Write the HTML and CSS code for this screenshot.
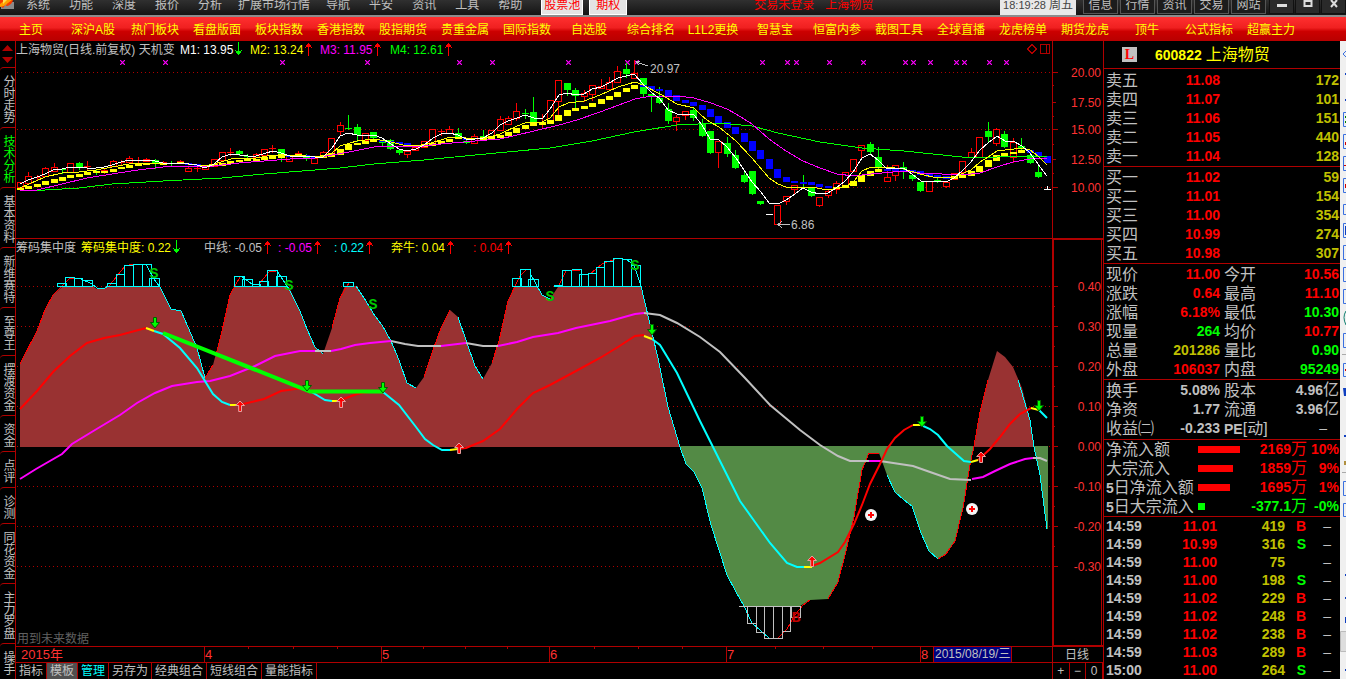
FILE: index.html
```html
<!DOCTYPE html>
<html lang="zh-CN">
<head>
<meta charset="utf-8">
<title>上海物贸 600822</title>
<link rel="stylesheet" href="styles.css">
</head>
<body>
<svg class="defs" width="0" height="0" aria-hidden="true">
  <defs>
    <symbol id="up" viewBox="0 0 7 14"><path d="M3 1h1v13H3zM2 2h3v1H2zM1 3h2v2H1zM4 3h2v2H4zM0 5h1v1H0zM6 5h1v1H6z" fill="currentColor"/></symbol>
    <symbol id="down" viewBox="0 0 7 14"><path d="M3 0h1v13H3zM2 11h3v1H2zM1 9h2v2H1zM4 9h2v2H4zM0 8h1v1H0zM6 8h1v1H6z" fill="currentColor"/></symbol>
    <symbol id="sell" viewBox="0 0 10 12"><path d="M3.500.5h3v5h3L5 11 .5 5.500h3z" fill="#0f0" stroke="#006000"/></symbol>
    <symbol id="buy" viewBox="0 0 10 12"><path d="M5 1 .7 5.500h3v6h2.800v-6h3z" fill="#f00" stroke="#e8a0a0"/></symbol>
    <symbol id="cross" viewBox="0 0 12 12"><circle cx="6" cy="6" r="6" fill="#f4f4f4"/><path d="M5 3h2v2h2v2H7v2H5V7H3V5h2z" fill="#f00"/></symbol>
    <symbol id="mark" viewBox="0 0 5 5"><path d="M0 0l5 5M5 0L0 5" stroke="#f0f" stroke-width="1.200"/></symbol>
  </defs>
</svg>
<div class="app">
  <header class="menubar">
    <svg class="logo" viewBox="0 0 16 10" aria-hidden="true"><path d="M1 2h13v7H1z" fill="#8a8a8a"/><path d="M0 0h13c-1 4-4 6-7 6l1-3-4 5-3-2z" fill="#f63a00"/><path d="M5 0h7L8 3 4 6 0 7V4z" fill="#ffa000"/><path d="M3 0h4L3 4z" fill="#ffe050"/></svg>
    <nav class="menus">
      <button>系统</button><button>功能</button><button>深度</button><button>报价</button><button>分析</button><button class="long">扩展市场行情</button><button>导航</button><button>平安</button><button>资讯</button><button>工具</button><button>帮助</button>
    </nav>
    <button class="pill pill-first">股票池</button>
    <button class="pill">期权</button>
    <div class="notice"><span>交易未登录</span><span>上海物贸</span></div>
    <time class="clock">18:19:28 <b>周五</b></time>
    <div class="quick"><button>信息</button><button>行情</button><button>资讯</button><button>交易</button><button>网站</button></div>
    <div class="window">
      <button aria-label="最小化"><svg viewBox="0 0 10 8"><path d="M0 4h10v3H0z" fill="#ddd"/></svg></button>
      <button aria-label="最大化"><svg viewBox="0 0 10 8"><path d="M1.500 1h7v5h-7z" fill="none" stroke="#ddd" stroke-width="2"/></svg></button>
      <button aria-label="关闭"><svg viewBox="0 0 10 8"><path d="M2 0l6 7M8 0L2 7" stroke="#ddd" stroke-width="2"/></svg></button>
    </div>
  </header>
  <nav class="ribbon">
    <a href="#">主页</a><a href="#">深沪A股</a><a href="#">热门板块</a><a href="#">看盘版面</a><a href="#">板块指数</a><a href="#">香港指数</a><a href="#">股指期货</a><a href="#">贵重金属</a><a href="#">国际指数</a><a href="#">自选股</a><a href="#">综合排名</a><a href="#">L1L2更换</a><a href="#">智慧宝</a><a href="#">恒富内参</a><a href="#">截图工具</a><a href="#">全球直播</a><a href="#">龙虎榜单</a><a href="#">期货龙虎</a><a href="#">顶牛</a><a href="#">公式指标</a><a href="#">超赢主力</a>
  </nav>
  <main class="work">
    <nav class="side">
      <div class="scroll"><svg viewBox="0 0 15 26"><path d="M2 10l5.500-6 5.500 6zM2 16l5.500 6 5.500-6z" fill="#b00000"/></svg></div>
      <a href="#">分时走势</a><a href="#" class="on">技术分析</a><a href="#">基本资料</a><a href="#">新维赛特</a><a href="#">至尊王</a><a href="#">摆渡资金</a><a href="#">资金</a><a href="#">点评</a><a href="#">诊测</a><a href="#">同花资金</a><a href="#">主力罗盘</a><a href="#">操手</a>
    </nav>

    <section class="charts">
      <div class="pane price">
        <div class="legend legend-price">
          <span class="dim">上海物贸(日线.前复权) 天机变</span>
          <span class="white">M1: 13.95<svg class="green"><use href="#down"/></svg></span>
          <span class="yellow">M2: 13.24<svg class="red"><use href="#up"/></svg></span>
          <span class="magenta">M3: 11.95<svg class="red"><use href="#up"/></svg></span>
          <span class="green">M4: 12.61<svg class="red"><use href="#up"/></svg></span>
        </div>
        <svg class="plot" viewBox="16 41 1087 198">
          <path class="grid" d="M17 72.500H1052M17 129.500H1052M17 187.500H1052"/>
          <g id="marks"></g>
          <g id="candles" class="crisp"></g>
          <g id="band" class="crisp"></g>
          <g class="lines">
            <polyline stroke="#0f0" points="20,191 45,190 79,188 112,184 163,181 222,178 264,174 315,170 340,168 374,164 424,160 475,155 550,148 592,141 634,132 677,125 719,123 752,126 778,133 820,142 862,148 904,151 962,157 997,157 1030,156 1047,157"/>
            <polyline stroke="#f0f" points="20,190 37,190 62,184 87,178 112,174 138,170 163,167 188,166 214,166 239,163 264,161 290,159 315,158 332,155 349,152 374,147 391,146 424,146 441,144 475,141 500,139 534,131 559,125 577,120 600,112 635,99 651,96 677,96 694,98 711,103 727,109 736,114 752,124 769,139 786,151 803,161 820,168 837,174 854,176 871,174 904,171 920,173 963,175 980,173 997,167 1013,162 1030,159 1047,158"/>
            <polyline stroke="#ff0" points="20,188 45,177 62,173 79,172 96,170 112,167 129,164 146,163 172,163 188,164 205,166 214,164 231,159 248,158 256,158 273,155 290,155 306,156 323,156 332,153 340,146 357,141 374,139 391,142 407,146 424,145 441,140 450,137 466,138 483,139 500,134 517,126 525,123 542,122 550,118 559,107 568,103 584,101 600,95 618,87 635,82 643,85 660,94 677,104 694,108 702,116 710,122 719,127 736,141 752,158 769,178 778,184 786,187 811,187 828,190 845,187 854,181 862,171 871,167 895,168 904,169 920,174 937,178 954,177 971,170 980,162 988,157 997,151 1022,148 1030,150 1038,156 1047,165"/>
            <polyline stroke="#fff" points="20,184 28,180 37,177 45,174 53,170 62,169 70,167 79,167 87,168 96,168 104,167 112,165 121,162 129,160 146,160 155,161 163,163 180,163 197,165 205,168 214,164 222,157 231,154 248,156 256,156 273,151 281,153 290,156 298,156 315,157 323,157 332,148 340,136 348,133 357,135 374,135 382,138 391,144 399,149 407,151 416,149 424,145 433,138 441,134 449,133 458,135 466,139 475,139 483,138 492,133 500,125 508,121 517,118 525,115 534,118 542,119 550,109 559,95 567,93 576,95 584,94 592,89 601,87 609,83 618,78 626,76 634,74 643,84 651,92 660,99 668,110 677,114 694,115 702,125 710,139 719,140 727,147 736,158 744,170 752,182 761,192 769,203 778,204 786,200 795,194 803,188 811,192 820,194 828,193 836,188 845,181 853,172 862,158 870,154 878,160 887,169 895,168 904,168 912,174 921,181 937,181 946,182 954,178 963,170 971,162 980,150 988,143 997,136 1005,141 1013,141 1022,146 1030,153 1038,164 1047,176"/>
            <path stroke="#c0c0c0" d="M648 66L636 62m4-1l-4 1 3 3M790 224.500H778m4-3l-4 3 4 3"/>
          </g>
          <g class="note"><text x="650" y="73">20.97</text><text x="791" y="229">6.86</text></g>
          <path class="frame" d="M1032 44.500l4.500 4.500-4.500 4.500-4.500-4.500zM1040.500 44.500h9v9h-9zM1046.500 44.500v9M1052.500 41V239M16 238.500H1103M1053 72.500h5M1053 102.500h3M1053 129.500h5M1053 159.500h3M1053 187.500h5M1053 85.500h1M1053 116.500h1M1053 144.500h1M1053 173.500h1"/>
          <g class="scale"><text x="1101" y="77">20.00</text><text x="1101" y="107">17.50</text><text x="1101" y="134">15.00</text><text x="1101" y="164">12.50</text><text x="1101" y="192">10.00</text></g>
        </svg>
      </div>

      <div class="pane chips">
        <div class="legend legend-chips">
          <span class="dim">筹码集中度</span>
          <span class="yellow">筹码集中度: 0.22<svg class="green"><use href="#down"/></svg></span>
          <span class="dim">中线: -0.05<svg class="red"><use href="#up"/></svg></span>
          <span class="magenta">: -0.05<svg class="red"><use href="#up"/></svg></span>
          <span class="cyan">: 0.22<svg class="red"><use href="#up"/></svg></span>
          <span class="yellow">奔牛: 0.04<svg class="red"><use href="#up"/></svg></span>
          <span class="red">: 0.04<svg class="red"><use href="#up"/></svg></span>
        </div>
        <svg class="plot" viewBox="16 239 1087 407">
          <path class="grid" d="M17 286.500H1052M17 326.500H1052M17 366.500H1052M17 406.500H1052M17 446.500H1052M17 486.500H1052M17 526.500H1052M17 566.500H1052"/>
          <path fill="#993232" d="M20 364L37 331 45 310 53 295 62 287 94 287 97 289 104 289 107 287 160 287 171 309 181 311 188 327 197 348 205 378 213 365 222 331 230 295 234 287 289 287 300 311 307 329 315 347 323 354 332 328 340 298 345 286 356 286 366 301 373 313 382 325 391 341 399 360 407 383 416 388 424 377 433 350 441 328 450 310 458 317 466 340 475 366 483 379 492 363 499 341 508 301 514 287 538 287 542 295 550 299 558 287 641 287 649 320 658 358 668 407 680 447H20zM974 447L980 412 988 380 997 351 1005 357 1013 367 1022 388 1030 420 1034 447z"/>
          <path fill="#538a45" d="M680 446L686 464 694 472 702 488 711 525 719 550 727 575 736 592 744 606H800L810 600 828 599 838 582 845 555 854 517 862 470 869 453H879L887 475 895 492 904 500 912 506 921 533 929 551 938 559 946 554 955 541 963 508 970 465 974 446zM1034 446L1040 475 1047 529 1048 529V446z"/>
          <g class="edges">
            <path stroke="#f00" d="M20 364L37 331 45 310 53 295 62 286 70 278 79 278M109 286L117 276 125 266 134 264 146 264M205 378L213 365M216 355L222 331 230 295 240 277M259 284L269 272 276 271M332 328L340 298 349 283M424 377L433 350 441 328 450 310M492 363L499 341 508 301 520 276 526 270M558 287L566 271 580 270M590 274L602 264 618 258M778 638L787 629 795 615 803 605 810 600M828 599L838 582 845 555 854 517 862 470 869 453H879M938 559L946 554 955 541 963 508 970 465 974 446 980 412 988 380"/>
            <path stroke="#0ff" d="M79 278L92 284 97 288 104 289 108 286M146 264L154 279 160 287 171 309 181 311 188 327 197 348 205 378M242 277L252 284 259 284M277 271L289 289 300 311 307 329 315 347 323 354M356 286L366 301 373 313 382 325 391 341 399 360 407 383 416 388M458 317L466 340 475 366 483 379M530 273L542 295 550 299M626 259L634 265 641 286 649 320 658 358 668 407 680 447 686 464 694 472 702 488 711 525 719 550 727 575 736 592 744 606 752 623 769 638M887 475L895 492 904 500 912 506 921 533 929 551 938 559M1018 380L1030 420 1034 447 1040 475 1047 529"/>
          </g>
          <path class="boxes cyan" d="M57.500 286.500v-3h9v3M65.500 286.500v-9h9v9M74.500 278.500h8v8M83.500 280.500h9v6M57 286.500H93M107.500 286.500v-3h9v3M116.500 286.500v-12h8v12M124.500 286.500v-21h9M133.500 286.500v-22h18v22M142.500 264.500v22M149.500 286.500v-8h10v8M107 286.500H160M234.500 286.500v-10h10v10M242.500 286.500v-7h10v7M251.500 284.500h9v2M259.500 286.500v-5h9v5M267.500 286.500v-16h10v16M276.500 286.500v-10h10v10M234 286.500H287M343.500 282.500h10v4h-10zM512.500 286.500v-8h9v8M520.500 286.500v-17h10v17M528.500 286.500v-7h10v7M512 286.500H539M554.500 286.500v-1h8M562.500 286.500v-16h9v16M571.500 269.500h10v17M579.500 286.500v-12h9v12M587.500 273.500h9v13M596.500 286.500v-19h8v19M604.500 286.500v-25h9v25M613.500 286.500v-28h9v28M621.500 259.500h10v27M630.500 265.500h10v21M554 286.500H641"/>
          <path class="boxes dim" d="M739 606.500H801M747.500 606.500v17h9M756.500 606.500v26h8M764.500 606.500v32h18v-32M773.500 606.500v32M781.500 631.500h9v-25M791.500 606.500v11h9v-11"/>
          <g class="trend">
            <path stroke="#f0f" d="M20 479L36 469 62 454 72 444 95 430 120 415 137 403 155 393 172 386 197 382 210 381 230 376 255 366 275 356 300 351 315 351M331 351L341 349 355 345 370 343 391 341M441 346L466 343M498 346L517 342 533 337 558 333 576 328 610 321 635 314 644 313M869 461H880M972 479L983 477 995 471 1010 464 1025 459 1033 458"/>
            <path stroke="#c0c0c0" d="M315 351H331M391 341L405 344 418 346 441 346M466 343L483 346 498 346M644 313L660 315 677 323 700 337 720 352 745 378 770 405 800 430 820 445 838 456 850 461 869 461M880 461L913 466 930 472 950 479 971 480M1033 458L1040 458 1047 461"/>
            <path stroke="#f00" d="M20 409L37 391 53 372 70 356 87 343 104 338 120 335 146 328M239 405L264 399 281 391 295 389 306 389M340 400L346 398 357 394 374 391 383 391M458 449L466 448 483 441 500 429 517 409 533 393 550 385 576 371 600 358 618 347 635 336 644 335M812 566L820 563 838 552 845 542 854 524 862 505 870 484 880 464 887 449 895 438 904 430 913 425M978 460L990 449 1000 437 1010 424 1020 414 1031 408"/>
            <path stroke="#0ff" d="M154 331L163 334 180 348 197 368 213 394 222 402 230 405M306 389L315 394 325 400 332 401M383 392L399 405 416 427 425 439 433 445 442 450 450 450M652 339L660 345 677 373 700 421 711 443 740 501 770 543 787 563 797 567 804 567M921 425L930 429 938 435 947 446 964 461 971 462M1039 410L1047 418"/>
            <path stroke="#ff0" d="M146 328L154 331M230 405H239M332 401H340M450 450L458 449M644 336L652 339M804 567H812M913 425H921M971 462L978 460M1031 408L1039 410"/>
            <path stroke="#0f0" stroke-width="4" d="M163 333L310 391.500H383"/>
          </g>
          <g><use href="#sell" x="150" y="317" width="10" height="12"/><use href="#sell" x="302" y="380" width="10" height="12"/><use href="#sell" x="378" y="382" width="10" height="12"/><use href="#sell" x="647" y="324" width="10" height="12"/><use href="#sell" x="917" y="416" width="10" height="12"/><use href="#sell" x="1034" y="400" width="10" height="12"/>
          <use href="#buy" x="235" y="400" width="10" height="12"/><use href="#buy" x="336" y="396" width="10" height="12"/><use href="#buy" x="454" y="442" width="10" height="12"/><use href="#buy" x="807" y="555" width="10" height="12"/><use href="#buy" x="976" y="451" width="10" height="12"/>
          <use href="#cross" x="865" y="509" width="12" height="12"/><use href="#cross" x="966" y="503" width="12" height="12"/></g>
          <g class="signal"><text x="154" y="278">S</text><text x="289" y="290">S</text><text x="373" y="309">S</text><text x="550" y="301">S</text><text x="635" y="270">S</text><text class="signal-buy" x="796" y="622">B</text></g>
          <path class="frame" d="M1052.500 239V646M1053.500 240V645M1053 239.500H1103M1101.500 240V646M1053 645.500H1103M1054 286.500h4M1054 306.500h1M1054 326.500h4M1054 346.500h1M1054 366.500h4M1054 386.500h1M1054 406.500h4M1054 426.500h1M1054 446.500h4M1054 466.500h1M1054 486.500h4M1054 506.500h1M1054 526.500h4M1054 546.500h1M1054 566.500h4"/>
          <g class="scale"><text x="1101" y="291">0.40</text><text x="1101" y="331">0.30</text><text x="1101" y="371">0.20</text><text x="1101" y="411">0.10</text><text x="1101" y="451">0.00</text><text x="1101" y="491">-0.10</text><text x="1101" y="531">-0.20</text><text x="1101" y="571">-0.30</text></g>
          <text class="hint" x="17" y="643">用到未来数据</text>
        </svg>
      </div>

      <div class="dates">
        <svg class="plot" viewBox="16 646 1087 17">
          <path class="frame" d="M16 646.500H1103M16 662.500H1103M204.500 647v15M381.500 647v15M549.500 647v15M726.500 647v15M920.500 647v15M1052.500 647v15M248.500 647v2M293.500 647v2M337.500 647v2M423.500 647v2M465.500 647v2M507.500 647v2M594.500 647v2M638.500 647v2M682.500 647v2M775.500 647v2M823.500 647v2M872.500 647v2"/>
          <rect x="933.500" y="646.500" width="78" height="16" fill="#000080" stroke="#b00000"/>
          <g class="months"><text x="21" y="659">2015年</text><text x="205" y="659">4</text><text x="382" y="659">5</text><text x="550" y="659">6</text><text x="727" y="659">7</text><text x="921" y="659">8</text></g>
          <g class="note"><text x="935" y="658">2015/08/19/三</text><text x="1065" y="659">日线</text></g>
        </svg>
      </div>
      <div class="tabs">
        <button>指标</button><button class="pressed">模板</button><button class="cyan">管理</button><button>另存为</button><button>经典组合</button><button>短线组合</button><button>量能指标</button>
        <div class="zoom"><button>+</button><button>−</button><button>0</button></div>
      </div>
    </section>

    <section class="quote">
      <h1><span class="badge">L</span><b>600822</b>上海物贸</h1>
      <table class="book asks">
        <tr><th>卖五</th><td class="r">11.08</td><td class="v">172</td></tr>
        <tr><th>卖四</th><td class="r">11.07</td><td class="v">101</td></tr>
        <tr><th>卖三</th><td class="r">11.06</td><td class="v">151</td></tr>
        <tr><th>卖二</th><td class="r">11.05</td><td class="v">440</td></tr>
        <tr><th>卖一</th><td class="r">11.04</td><td class="v">128</td></tr>
      </table>
      <table class="book">
        <tr><th>买一</th><td class="r">11.02</td><td class="v">59</td></tr>
        <tr><th>买二</th><td class="r">11.01</td><td class="v">154</td></tr>
        <tr><th>买三</th><td class="r">11.00</td><td class="v">354</td></tr>
        <tr><th>买四</th><td class="r">10.99</td><td class="v">274</td></tr>
        <tr><th>买五</th><td class="r">10.98</td><td class="v">307</td></tr>
      </table>
      <table class="facts">
        <tr><th>现价</th><td class="r">11.00</td><th>今开</th><td class="r">10.56</td></tr>
        <tr><th>涨跌</th><td class="r">0.64</td><th>最高</th><td class="r">11.10</td></tr>
        <tr><th>涨幅</th><td class="r">6.18%</td><th>最低</th><td class="g">10.30</td></tr>
        <tr><th>现量</th><td class="g">264</td><th>均价</th><td class="r">10.77</td></tr>
        <tr><th>总量</th><td class="v">201286</td><th>量比</th><td class="g">0.90</td></tr>
        <tr><th>外盘</th><td class="r">106037</td><th>内盘</th><td class="g">95249</td></tr>
      </table>
      <table class="facts shares">
        <tr><th>换手</th><td>5.08%</td><th>股本</th><td>4.96<i>亿</i></td></tr>
        <tr><th>净资</th><td>1.77</td><th>流通</th><td>3.96<i>亿</i></td></tr>
        <tr><th>收益㈡</th><td>-0.233</td><th><b>PE</b>[动]</th><td class="dash">–</td></tr>
      </table>
      <table class="flow">
        <tr><th>净流入额</th><td><div class="bar" style="width:42px"></div></td><td class="r">2169<i>万</i></td><td class="r">10%</td></tr>
        <tr><th>大宗流入</th><td><div class="bar" style="width:35px"></div></td><td class="r">1859<i>万</i></td><td class="r">9%</td></tr>
        <tr><th><b>5</b>日净流入额</th><td><div class="bar" style="width:32px"></div></td><td class="r">1695<i>万</i></td><td class="r">1%</td></tr>
        <tr><th><b>5</b>日大宗流入</th><td><div class="bar bar-out" style="width:7px"></div></td><td class="g">-377.1<i>万</i></td><td class="g">-0%</td></tr>
      </table>
      <table class="ticks">
        <tr><th>14:59</th><td class="r">11.01</td><td class="v">419</td><td class="r">B</td><td>–</td></tr>
        <tr><th>14:59</th><td class="r">10.99</td><td class="v">316</td><td class="g">S</td><td>–</td></tr>
        <tr><th>14:59</th><td class="r">11.00</td><td class="v">75</td><td></td><td>–</td></tr>
        <tr><th>14:59</th><td class="r">11.00</td><td class="v">198</td><td class="g">S</td><td>–</td></tr>
        <tr><th>14:59</th><td class="r">11.02</td><td class="v">229</td><td class="r">B</td><td>–</td></tr>
        <tr><th>14:59</th><td class="r">11.02</td><td class="v">248</td><td class="r">B</td><td>–</td></tr>
        <tr><th>14:59</th><td class="r">11.02</td><td class="v">238</td><td class="r">B</td><td>–</td></tr>
        <tr><th>14:59</th><td class="r">11.03</td><td class="v">289</td><td class="r">B</td><td>–</td></tr>
        <tr><th>15:00</th><td class="r">11.00</td><td class="v">264</td><td class="g">S</td><td>–</td></tr>
      </table>
    </section>

    <aside class="dock">
      <svg viewBox="1340 41 6 638" aria-hidden="true">
        <g fill="none" stroke="#3a70e0"><path d="M1346 51l-3 3 3 3M1343.500 112.500h4v14h-4zM1343.500 134.500h4v14h-4zM1343.500 156.500h4v14h-4zM1343.500 178.500h4v14h-4zM1343.500 204.500h4v10h-4zM1343.500 223.500h4v14h-4zM1343.500 245.500h4v14h-4zM1343.500 267.500h4v14h-4zM1343.500 289.500h4v14h-4zM1343.500 333.500h4v14h-4zM1343.500 363.500h4v13h-4zM1343.500 481.500h4v14h-4zM1343.500 503.500h4v13h-4z"/></g>
        <path stroke="#108070" fill="none" d="M1346 311q-4 6 0 14"/>
        <path fill="#d00000" d="M1345 142h1v3h-1zM1344 165h2v1h-2zM1345 184h1v4h-1zM1345 369h1v2h-1z"/>
        <path fill="#008000" d="M1345 116h1v2h-1zM1345 121h1v2h-1z"/>
        <path fill="#1040c0" d="M1345 73h1v2h-1zM1345 99h1v2h-1zM1345 226h1v9h-1zM1343 388h3v8h-2zM1344 435h2v2h-2zM1345 574h1v2h-1zM1345 597h1v2h-1zM1345 617h1v6h-1zM1345 669h1v2h-1z"/>
        <path fill="#b09040" d="M1344 461h2v4h-2z"/>
        <path stroke="#aaa" d="M1342 354.500h4M1342 472.500h4"/>
        <path fill="#ddd" stroke="#bbb" d="M1340.500 631.500h7v20h-7z"/>
      </svg>
    </aside>
  </main>
</div>
<script src="chart.js"></script>
</body>
</html>
```

FILE: styles.css
```css
* { box-sizing: border-box; }
body { margin: 0; background: #000; color: #c0c0c0; font: 12px/16px "Liberation Sans", "Noto Sans CJK SC", sans-serif; }
button { font: inherit; color: inherit; background: none; border: 0; padding: 0; margin: 0; white-space: nowrap; }
a { color: inherit; text-decoration: none; white-space: nowrap; }
.defs { position: absolute; }
.app { display: flex; flex-direction: column; height: 100vh; overflow: hidden; }

.dim { color: #c0c0c0; }
.white { color: #fff; }
.yellow { color: #ff0; }
.magenta { color: #f0f; }
.cyan { color: #0ff; }
.green { color: #0f0; }
.red { color: #f00; }

/* menu bar */
.menubar { display: flex; flex: none; align-items: flex-start; height: 17px; line-height: 11px; background: linear-gradient(#303030, #141414); border-bottom: 2px solid #8c8c8c; }
.logo { width: 16px; height: 10px; }
.menus { display: flex; gap: 19px; padding-left: 10px; }
.menus .long { margin: 0 -3px; }
.pill { height: 15px; padding: 0 6px 4px; margin-left: 6px; color: #f00; background: #e4e4e4; border: 1px solid #fff; border-top: 0; }
.pill-first { padding: 0 2px 4px; margin-left: 19px; }
.notice { display: flex; flex: 1; gap: 11px; padding-left: 127px; color: #f00; white-space: nowrap; }
.clock { height: 15px; padding: 0 3px; font-size: 11px; white-space: nowrap; color: #444; background: #e8e8e8; }
.clock b { font-size: 12px; font-weight: normal; }
.quick { display: flex; gap: 2px; padding: 0 3px 0 7px; }
.quick button { width: 35px; height: 14px; padding-bottom: 3px; background: #1c1c1c; border: 1px solid #555; border-top: 0; }
.window { display: flex; gap: 1px; }
.window button { display: flex; justify-content: center; width: 25px; height: 14px; background: #2a2a2a; border: 1px solid #111; border-top: 0; }
.window svg { width: 10px; height: 8px; }

/* red ribbon */
.ribbon { display: flex; flex: none; height: 24px; line-height: 27px; color: #ff0; background: linear-gradient(#ff3030 0, #f02020 45%, #cc0000 60%, #b80000 100%); }
.ribbon a { flex: 0 1 62px; text-align: center; }

.work { display: flex; flex: 1; min-height: 0; }

/* left vertical tabs */
.side { display: flex; flex: none; flex-direction: column; width: 16px; overflow: hidden; border-right: 1px solid #b00000; }
.side a { flex: none; padding: 7px 0 4px; line-height: 14px; writing-mode: vertical-rl; text-orientation: upright; border-top: 1px solid #b00000; border-top-left-radius: 4px; }
.side .on { color: #0f0; }
.scroll { height: 26px; }
.scroll svg { display: block; width: 15px; height: 26px; }

/* charts */
.charts { display: flex; flex: 1; flex-direction: column; min-width: 0; }
.pane { position: relative; min-height: 0; }
.price { flex: 198; }
.chips { flex: 407; }
.plot { display: block; width: 100%; height: 100%; }
.legend { position: absolute; top: 1px; left: 0; display: grid; white-space: nowrap; }
.legend-price { grid-template-columns: 164px 70px 70px 70px auto; }
.legend-chips { grid-template-columns: 65px 123px 74px 56px 57px 82px auto; }
.legend svg { width: 7px; height: 14px; margin-left: 2px; vertical-align: -2px; }
.grid { fill: none; stroke: #b00000; stroke-dasharray: 1 3; }
.frame { fill: none; stroke: #b00000; }
.crisp, .grid, .frame, .boxes, .edges, .lines { shape-rendering: crispEdges; }
.lines, .edges { fill: none; }
.trend { fill: none; stroke-width: 2; }
.boxes { fill: none; stroke: currentColor; }
.scale { fill: #ff3232; text-anchor: end; }
.note { fill: #c0c0c0; }
.months { fill: #ff3232; font-size: 13px; }
.hint { fill: #606060; }
.signal { fill: #00c800; font: bold 15px "Liberation Mono", monospace; text-anchor: middle; }
.signal-buy { fill: #c00000; }
.dates { flex: none; height: 17px; }
.tabs { display: flex; flex: none; height: 16px; line-height: 16px; }
.tabs button { padding: 0 3px; border-right: 1px solid #b00000; }
.tabs .pressed { background: #505050; }
.zoom { display: flex; margin-left: auto; width: 51px; border-left: 1px solid #b00000; }
.tabs .zoom button { flex: 1; padding: 0; }

/* quote panel */
.quote { flex: none; width: 237px; overflow: hidden; border-left: 1px solid #b00000; }
.quote h1 { display: flex; align-items: center; height: 27px; margin: 0; padding-left: 18px; font-size: 16px; font-weight: normal; color: #ff0; }
.quote h1 b { margin: 0 4px 0 18px; font-size: 14px; }
.badge { width: 15px; height: 15px; font: bold 14px/15px "Liberation Serif", serif; text-align: center; color: #f00; background: #c0c0c0; }
.quote table { width: 100%; table-layout: fixed; border-spacing: 0; border-top: 1px solid #b00000; padding: 1px 1px 0 2px; }
.quote .asks { padding-top: 2px; }
.quote tr { height: 19px; }
.quote th, .quote td { height: 19px; padding: 0; line-height: 19px; white-space: nowrap; overflow: visible; }
.quote th { font-size: 16px; font-weight: normal; text-align: left; }
.quote td, .quote th b { font-size: 14px; font-weight: bold; }
.quote td { text-align: right; }
.quote i { font-size: 16px; font-style: normal; font-weight: normal; }
.quote td i, .quote th b { line-height: 1; }
.quote .r { color: #f00; }
.quote .g { color: #0f0; }
.quote .v { color: #c0c000; }
.book th { width: 60px; }
.book td:nth-child(2) { width: 54px; }
.facts th { width: 40px; }
.facts td:nth-child(2) { width: 74px; }
.quote .facts th:nth-child(3) { width: 48px; padding-left: 4px; }
.quote .facts .dash { padding-right: 12px; font-weight: normal; }
.quote .shares { padding-bottom: 1px; }
.quote .flow { padding-top: 0; }
.flow th { width: 92px; }
.flow td:nth-child(2) { width: 42px; }
.flow td:nth-child(3) { width: 67px; }
.bar { height: 7px; background: #f00; }
.bar-out { background: #0f0; }
.quote .ticks { padding-top: 0; }
.quote .ticks tr, .quote .ticks td, .quote .ticks th { height: 18px; line-height: 18px; }
.quote .ticks th { width: 50px; font-size: 14px; font-weight: bold; }
.ticks td:nth-child(2) { width: 61px; }
.ticks td:nth-child(3) { width: 68px; }
.ticks td:nth-child(4) { width: 21px; }
.quote .ticks td:nth-child(5) { padding-right: 8px; font-weight: normal; }

.dock { flex: none; width: 6px; background: #f0f0f0; }
.dock svg { display: block; width: 6px; height: 638px; }
```

FILE: chart.js
```javascript
// One entry per trading day: [colour, high, body top, body bottom, low].
const days = [
  ['r',182,182,187,187],['r',172,176,183,183],['r',175,177,178,179],['r',167,168,176,176],['r',163,167,171,171],
  ['g',168,169,169,173],['r',163,163,172,172],['g',162,163,167,169],['r',161,166,166,169],['g',169,172,172,174],
  ['r',168,170,170,173],['r',160,161,166,166],['r',160,162,163,165],['r',156,158,162,162],['r',157,160,160,163],
  ['r',158,159,161,161],['g',159,160,163,168],['r',161,162,163,164],['g',161,163,163,166],['r',160,161,163,163],
  ['r',166,168,171,171],['r',166,168,168,171],['r',165,165,169,169],['r',159,159,166,166],['r',152,152,160,160],
  ['r',148,152,152,155],['g',150,151,154,155],['g',154,156,157,159],['r',153,154,157,157],['r',149,149,155,155],
  ['r',145,148,148,152],['g',149,149,154,161],['r',156,156,161,161],['r',151,153,156,156],['g',154,155,159,160],
  ['r',157,158,163,163],['r',151,152,157,157],['r',138,138,153,153],['r',122,125,131,135],['g',115,128,128,129],
  ['g',124,127,135,141],['r',133,133,140,140],['g',132,132,138,138],['g',140,142,142,145],['g',139,140,149,149],
  ['g',149,150,153,154],['r',151,151,154,157],['r',146,147,150,150],['r',141,141,147,147],['r',129,129,144,144],
  ['r',129,131,131,135],['r',126,129,133,133],['g',128,133,137,137],['g',140,141,143,143],['r',134,136,143,143],
  ['g',130,136,138,138],['r',130,130,137,137],['r',116,119,130,130],['r',116,118,124,124],['r',103,111,118,120],
  ['g',109,113,113,118],['g',97,112,122,122],['r',114,122,122,128],['r',100,100,121,121],['r',80,80,101,114],
  ['g',83,83,90,95],['g',88,90,96,107],['r',90,93,96,101],['r',85,85,94,100],['r',79,86,88,88],
  ['r',77,82,89,89],['r',66,71,82,82],['g',63,69,74,77],['r',60,73,78,78],['g',78,78,94,96],
  ['g',94,94,97,111],['g',87,98,103,103],['g',103,109,121,123],['r',115,117,121,130],['r',111,111,115,119],
  ['g',108,110,118,120],['g',119,123,136,136],['g',131,131,153,153],['r',141,141,152,167],['g',137,143,154,156],
  ['g',150,155,168,168],['g',170,175,182,182],['g',171,171,194,194],['g',201,201,204,204],['w',214,214,214,214],
  ['r',205,205,224,224],['r',196,196,201,204],['r',185,185,189,194],['g',175,183,183,187],['g',188,188,196,196],
  ['r',197,197,205,206],['r',190,191,195,197],['r',181,183,189,193],['r',172,172,187,187],['r',159,159,171,171],
  ['r',145,145,150,158],['g',142,144,152,154],['g',147,157,167,169],['r',165,177,181,181],['r',165,165,175,180],
  ['g',162,167,169,178],['g',175,175,179,180],['g',182,182,191,191],['r',181,181,191,191],['g',175,180,180,182],
  ['r',181,182,186,187],['r',173,173,179,179],['r',161,161,172,172],['r',148,152,157,157],['r',137,137,157,157],
  ['g',122,131,137,141],['r',128,129,143,145],['g',131,134,147,147],['r',138,142,157,162],['g',138,146,149,149],
  ['g',155,155,163,163],['g',166,172,177,177],['w',186,189,189,189]
];

// Strength band: colour letter, top and bottom per day.
const band = 'y188-190 y186-189 y184-187 y181-185 y179-183 y177-181 y175-178 y174-177 y172-175 y171-173 y171-173 y169-172 y167-169 y165-168 y164-166 y163-165 b163-164 y163-165 y163-164 y162-164 b163-165 b164-166 b165-167 y164-166 y163-166 y161-164 y160-162 y159-161 y159-161 y157-160 y156-159 y154-158 b156-157 y154-156 b155-157 b156-158 y155-158 y153-157 y149-155 y144-150 y143-145 y141-144 y139-142 b140-142 b141-143 b142-144 b143-146 b145-147 y144-147 y143-146 y141-144 y139-142 y137-139 b138-140 y138-139 y137-140 y136-139 y135-138 y132-136 y128-133 y125-129 y122-126 y122-125 y120-124 y115-121 y110-116 y108-111 y106-109 y103-107 y99-104 y96-100 y92-97 y88-92 y85-89 b85-87 b86-90 b89-91 b90-96 b95-101 b100-103 b102-106 b105-110 b109-117 b116-123 b122-128 b127-134 b133-142 b141-151 b150-159 b159-169 b169-178 b177-182 b181-183 b182-184 b182-185 b184-187 b186-188 y187-189 y185-188 y181-186 y175-182 y171-176 y169-172 b169-171 b169-171 b170-171 b170-172 b171-175 b174-177 b175-177 b176-179 y176-179 y175-178 y171-176 y166-172 y160-167 y155-161 y153-156 y152-154 y150-153 b150-153 b152-157 b156-163'.split(' ');

const colours = { r: '#f00', g: '#0f0', w: '#fff', y: '#ff0', b: '#00f' };
const svgNs = 'http://www.w3.org/2000/svg';
const dayX = i => Math.round(20 + i * 8.414);

function add(parent, tag, attrs) {
  const el = document.createElementNS(svgNs, tag);
  for (const key in attrs) el.setAttribute(key, attrs[key]);
  parent.appendChild(el);
}

const candles = document.getElementById('candles');
days.forEach(([c, high, top, bottom, low], i) => {
  const x = dayX(i);
  const stroke = colours[c];
  add(candles, 'path', { d: `M${x + .5} ${high}V${top}M${x + .5} ${bottom}V${low + 1}`, stroke });
  if (bottom - top < 2) {
    add(candles, 'rect', { x: x - 3, y: top, width: 7, height: 1, fill: stroke });
  } else if (c === 'g') {
    add(candles, 'rect', { x: x - 3, y: top, width: 7, height: bottom - top, fill: stroke });
  } else {
    add(candles, 'rect', { x: x - 2.5, y: top + .5, width: 6, height: bottom - top, fill: '#000', stroke });
  }
});

const bandGroup = document.getElementById('band');
band.forEach((entry, i) => {
  const [top, bottom] = entry.slice(1).split('-').map(Number);
  add(bandGroup, 'rect', { x: dayX(i) - 3, y: top, width: 7, height: bottom - top, fill: colours[entry[0]] });
});

const marks = document.getElementById('marks');
[122, 165, 282, 367, 459, 492, 568, 627, 636, 762, 787, 796, 829, 863, 905, 913, 930, 956, 964, 989, 1006].forEach(x =>
  add(marks, 'use', { href: '#mark', x: x - 2, y: 60, width: 5, height: 5 }));
```
